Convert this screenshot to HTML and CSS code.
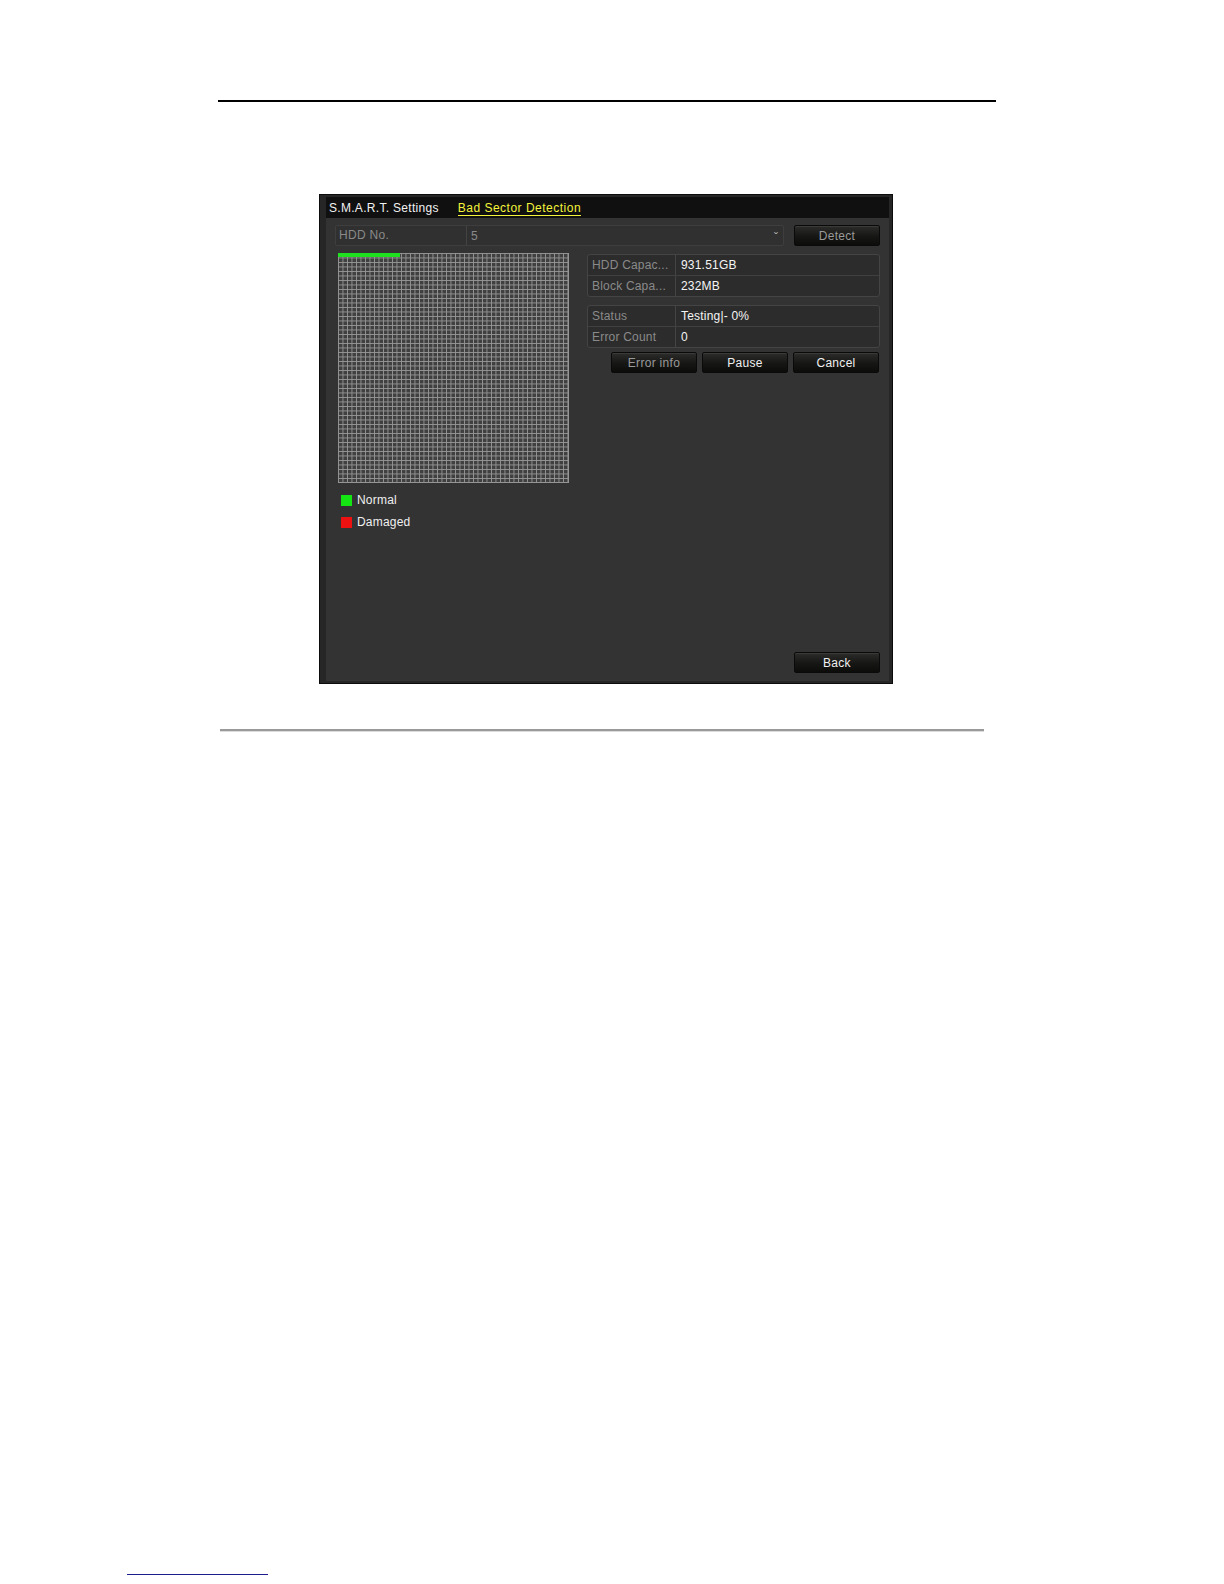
FILE: index.html
```html
<!DOCTYPE html>
<html>
<head>
<meta charset="utf-8">
<link rel="stylesheet" href="styles.css">
</head>
<body>
<div class="page">
  <div class="rule-top"></div>
  <div class="window">
    <div class="panel">
      <div class="titlebar">
        <span class="tab">S.M.A.R.T. Settings</span>
        <span class="tab active">Bad Sector Detection</span>
      </div>
      <div class="content">
        <div class="hdd-row">
          <div class="select">
            <div class="sel-label">HDD No.</div>
            <div class="sel-value">5</div>
            <div class="sel-arrow">&#711;</div>
          </div>
          <div class="btn dim">Detect</div>
        </div>
        <div class="main">
          <div class="left">
            <div class="grid"><div class="progress"></div></div>
            <div class="legend">
              <div class="leg-item"><span class="sw green"></span>Normal</div>
              <div class="leg-item"><span class="sw red"></span>Damaged</div>
            </div>
          </div>
          <div class="right">
            <div class="table">
              <div class="trow"><div class="tl">HDD Capac...</div><div class="tv">931.51GB</div></div>
              <div class="trow"><div class="tl">Block Capa...</div><div class="tv">232MB</div></div>
            </div>
            <div class="table">
              <div class="trow"><div class="tl">Status</div><div class="tv">Testing|- 0%</div></div>
              <div class="trow"><div class="tl">Error Count</div><div class="tv">0</div></div>
            </div>
            <div class="btns">
              <div class="btn dim">Error info</div>
              <div class="btn">Pause</div>
              <div class="btn">Cancel</div>
            </div>
          </div>
        </div>
        <div class="footer">
          <div class="btn">Back</div>
        </div>
      </div>
    </div>
  </div>
  <div class="rule-bottom"></div>
  <div class="spacer"></div>
  <div class="rule-blue"></div>
</div>
</body>
</html>
```
FILE: styles.css
```css
html, body {
  margin: 0;
  padding: 0;
  background: #ffffff;
  overflow: hidden;
}
.page {
  width: 1224px;
  font-family: "Liberation Sans", Arial, sans-serif;
  padding-top: 100px;
  padding-bottom: 4px;
  box-sizing: border-box;
}
.rule-top {
  margin-left: 218px;
  width: 778px;
  height: 2px;
  background: #000;
}
.window {
  margin-top: 92px;
  margin-left: 319px;
  width: 574px;
  height: 490px;
  box-sizing: border-box;
  background: #262626;
  border: 1px solid #0c0c0c;
  padding: 2px 3px 2px 6px;
}
.panel {
  height: 100%;
  background: #333333;
  display: flex;
  flex-direction: column;
}
.titlebar {
  height: 21px;
  background: #101010;
  display: flex;
  align-items: center;
  padding-left: 3px;
  gap: 19px;
}
.tab {
  color: #f2f2f2;
  font-size: 12px;
  letter-spacing: 0.3px;
  line-height: 14px;
}
.tab.active {
  color: #f4f43a;
  border-bottom: 1px solid #f4f43a;
  letter-spacing: 0.5px;
  margin-top: 1px;
}
.content {
  flex: 1;
  display: flex;
  flex-direction: column;
  padding: 7px 9px 8px 9px;
}
.hdd-row {
  display: flex;
  gap: 10px;
  height: 21px;
}
.select {
  flex: 1;
  display: flex;
  align-items: center;
  border: 1px solid #3e3e3e;
  border-radius: 2px;
  background: #303030;
  box-sizing: border-box;
  font-size: 12px;
  color: #8a8a8a;
}
.sel-label {
  width: 131px;
  padding-left: 3px;
  box-sizing: border-box;
  border-right: 1px solid #434343;
  height: 100%;
  line-height: 19px;
  letter-spacing: 0.3px;
}
.sel-value {
  flex: 1;
  padding-left: 4px;
}
.sel-arrow {
  width: 9px;
  color: #b0b0b0;
  font-size: 12px;
  line-height: 12px;
  padding-top: 4px;
}
.btn {
  width: 86px;
  height: 21px;
  box-sizing: border-box;
  border: 1px solid #0a0a0a;
  border-radius: 2px;
  background: linear-gradient(#2c2c2a, #161614 55%, #0c0c0b);
  color: #f0f0f0;
  font-size: 12px;
  letter-spacing: 0.3px;
  display: flex;
  align-items: center;
  justify-content: center;
  box-shadow: inset 0 1px 0 #3a3a38;
}
.btn.dim {
  color: #9a9a9a;
}
.main {
  display: flex;
  margin-top: 7px;
  gap: 18px;
}
.left {
  width: 234px;
  padding-left: 3px;
  box-sizing: border-box;
}
.grid {
  width: 231px;
  height: 230px;
  background-color: #404040;
  background-image:
    linear-gradient(to right, #959595 1px, transparent 1px),
    linear-gradient(to bottom, #959595 1px, transparent 1px);
  background-size: 4.5px 4.5px;
  position: relative;
  border-right: 1px solid #959595;
  border-bottom: 1px solid #959595;
  box-sizing: border-box;
}
.progress {
  position: absolute;
  left: 0;
  top: 0;
  width: 62px;
  height: 4px;
  background: #1fe01f;
}
.legend {
  margin-top: 11px;
  margin-left: 3px;
  display: flex;
  flex-direction: column;
  gap: 10px;
}
.leg-item {
  display: flex;
  align-items: center;
  gap: 5px;
  color: #f0f0f0;
  font-size: 12px;
  letter-spacing: 0.2px;
  height: 12px;
}
.sw {
  width: 11px;
  height: 11px;
  display: inline-block;
}
.sw.green { background: #14e614; }
.sw.red { background: #ee1111; }
.right {
  width: 295px;
  display: flex;
  flex-direction: column;
  padding-top: 1px;
}
.table {
  border: 1px solid #444;
  border-radius: 3px;
  background: #2c2c2c;
  margin-bottom: 8px;
}
.trow {
  display: flex;
  height: 20px;
  font-size: 12px;
  letter-spacing: 0.2px;
}
.trow + .trow {
  border-top: 1px solid #404040;
}
.tl {
  width: 88px;
  box-sizing: border-box;
  padding-left: 4px;
  border-right: 1px solid #444;
  color: #8a8a8a;
  line-height: 20px;
  white-space: nowrap;
  overflow: hidden;
}
.tv {
  padding-left: 5px;
  color: #f4f4f4;
  line-height: 20px;
}
.btns {
  display: flex;
  justify-content: flex-end;
  gap: 5px;
  margin-top: -4px;
  padding-right: 1px;
}
.footer {
  margin-top: auto;
  display: flex;
  justify-content: flex-end;
}
.rule-bottom {
  margin-top: 45px;
  margin-left: 220px;
  width: 764px;
  height: 2px;
  background: #9a9a9a;
  border-bottom: 1px solid #dcdcdc;
}
.spacer {
  height: 842px;
}
.rule-blue {
  margin-left: 127px;
  width: 141px;
  height: 1px;
  background: #1c1c8c;
}
```
